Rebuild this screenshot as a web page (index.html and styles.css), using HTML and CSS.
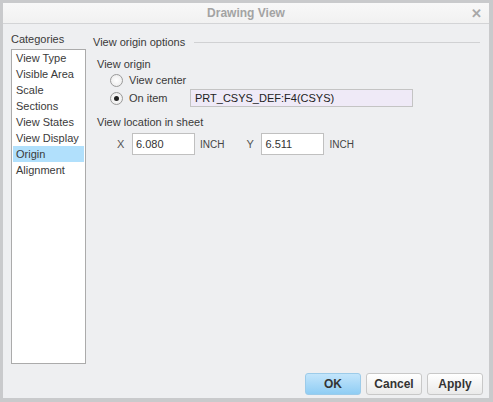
FILE: index.html
```html
<!DOCTYPE html>
<html lang="en">
<head>
    <meta charset="UTF-8">
    <title>Drawing View</title>
    <link rel="stylesheet" href="styles.css">
</head>
<body>
    <div class="dialog">
        <div class="titlebar">
            <span class="title">Drawing View</span>
            <span class="close">&#x2715;</span>
        </div>
        <div class="content">
            <div class="sidebar">
                <div class="label">Categories</div>
                <ul class="categories">
                    <li>View Type</li>
                    <li>Visible Area</li>
                    <li>Scale</li>
                    <li>Sections</li>
                    <li>View States</li>
                    <li>View Display</li>
                    <li class="selected">Origin</li>
                    <li>Alignment</li>
                </ul>
            </div>
            <div class="panel">
                <div class="group-title"><span>View origin options</span></div>
                <div class="section">View origin</div>
                <div class="radio-row">
                    <span class="radio"></span>
                    <span class="radio-label">View center</span>
                </div>
                <div class="radio-row">
                    <span class="radio checked"></span>
                    <span class="radio-label">On item</span>
                    <div class="item-field">PRT_CSYS_DEF:F4(CSYS)</div>
                </div>
                <div class="section">View location in sheet</div>
                <div class="coords">
                    <span class="axis">X</span>
                    <input class="num" type="text" value="6.080">
                    <span class="unit">INCH</span>
                    <span class="axis axis-y">Y</span>
                    <input class="num" type="text" value="6.511">
                    <span class="unit">INCH</span>
                </div>
            </div>
        </div>
        <div class="buttons">
            <button class="btn primary">OK</button>
            <button class="btn">Cancel</button>
            <button class="btn">Apply</button>
        </div>
    </div>
</body>
</html>
```

FILE: styles.css
```css
html, body {
    margin: 0;
    padding: 0;
}
body {
    font-family: "Liberation Sans", Arial, sans-serif;
    font-size: 11px;
    color: #3a3a3a;
    background-color: #c9cacc;
    width: 493px;
    height: 402px;
    overflow: hidden;
    white-space: nowrap;
}
.dialog {
    margin: 3px 4px 4px 3px;
    height: 395px;
    background-color: #eeeff1;
    display: flex;
    flex-direction: column;
}
.titlebar {
    height: 20px;
    background: linear-gradient(#f8f8f8, #f1f1f1);
    border-bottom: 1px solid #d3d4d6;
    display: flex;
    align-items: center;
    justify-content: center;
    position: relative;
}
.title {
    font-weight: bold;
    color: #a3a3a3;
    font-size: 12px;
}
.close {
    position: absolute;
    right: 7px;
    top: 3px;
    color: #a8a8a8;
    font-weight: bold;
    font-size: 13px;
}
.content {
    flex: 1;
    display: flex;
    padding: 8px 0 0 8px;
}
.sidebar {
    width: 75px;
}
.label {
    height: 17px;
    line-height: 14px;
}
.categories {
    list-style: none;
    margin: 0;
    padding: 0 1px;
    height: 315px;
    background: #fff;
    border: 1px solid #ababab;
    box-sizing: border-box;
}
.categories li {
    height: 16px;
    line-height: 16px;
    padding-left: 3px;
}
.categories li.selected {
    background-color: #b1e0fc;
}
.panel {
    flex: 1;
    padding-left: 7px;
    padding-right: 9px;
}
.group-title {
    display: flex;
    align-items: center;
    height: 14px;
    margin-top: 3px;
}
.group-title::after {
    content: "";
    flex: 1;
    height: 1px;
    background: #d0d1d3;
    margin-left: 9px;
}
.section {
    margin-top: 8px;
    margin-left: 4px;
    height: 14px;
    line-height: 14px;
}
.radio-row {
    display: flex;
    align-items: center;
    margin-left: 17px;
    height: 18px;
}
.radio {
    width: 11px;
    height: 11px;
    flex: none;
    border-radius: 50%;
    border: 1px solid #9a9a9a;
    background: radial-gradient(#ffffff, #e8e8e8);
    position: relative;
}
.radio.checked::after {
    content: "";
    position: absolute;
    left: 3px;
    top: 3px;
    width: 5px;
    height: 5px;
    border-radius: 50%;
    background: #222;
}
.radio-label {
    margin-left: 6px;
    width: 61px;
}
.item-field {
    width: 223px;
    height: 18px;
    line-height: 17px;
    box-sizing: border-box;
    border: 1px solid #c4c4c4;
    background: #efeaf7;
    padding-left: 4px;
    color: #222;
}
.coords {
    display: flex;
    align-items: center;
    margin-left: 24px;
    margin-top: 4px;
    height: 22px;
}
.axis {
    color: #555;
    width: 15px;
}
.axis-y {
    margin-left: 22px;
}
.num {
    width: 63px;
    height: 22px;
    box-sizing: border-box;
    border: 1px solid #c0c0c0;
    background: #fff;
    font-family: "Liberation Sans", Arial, sans-serif;
    font-size: 11px;
    color: #333;
    padding: 0 3px;
    margin: 0;
    outline: none;
}
.unit {
    margin-left: 5px;
    font-size: 10px;
    color: #444;
}
.buttons {
    display: flex;
    justify-content: flex-end;
    gap: 5px;
    padding: 0 6px 3px 0;
}
.btn {
    width: 56px;
    height: 22px;
    border: 1px solid #c8c8c8;
    border-radius: 3px;
    background: linear-gradient(#ffffff, #eaeaea);
    font-family: "Liberation Sans", Arial, sans-serif;
    font-size: 12px;
    font-weight: bold;
    color: #333;
    padding: 0;
}
.btn.primary {
    border-color: #9ccbe9;
    background: linear-gradient(#c3e5fb, #8fcdf4);
}
```
